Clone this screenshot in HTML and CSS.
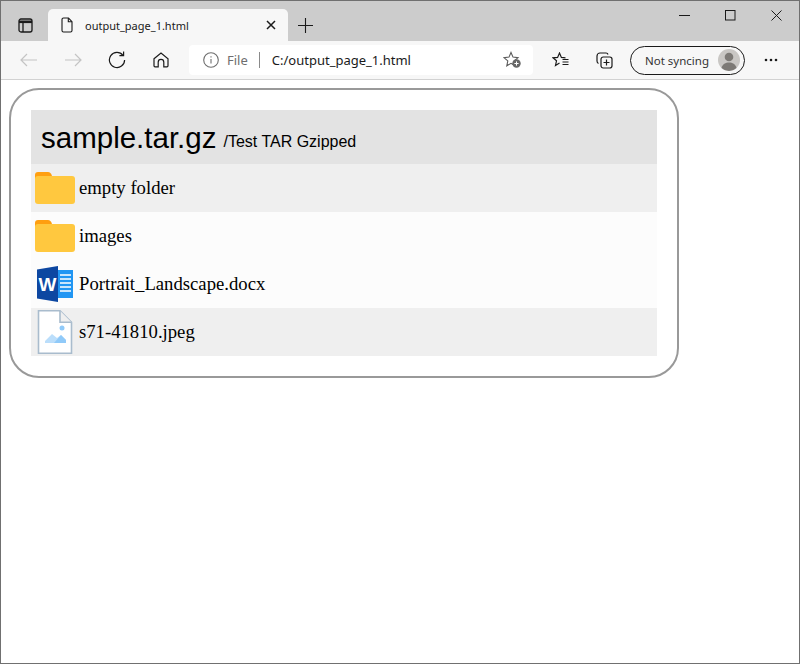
FILE: index.html
```html
<!DOCTYPE html>
<html>
<head>
    <meta charset="UTF-8">
    <title>output_page_1.html</title>
    <link rel="stylesheet" href="styles.css">
</head>
<body>
<div class="ventana">
    <!-- Tab strip -->
    <div class="pestanas">
        <svg class="icono-vertical" width="16" height="15" viewBox="0 0 16 15" fill="none" stroke="#1a1a1a" stroke-width="1.3">
            <rect x="1" y="1" width="13" height="13" rx="2"/>
            <path d="M1 3.800h13" stroke-width="2.600"/>
            <path d="M5 4.500v9.500"/>
        </svg>
        <div class="pestana">
            <svg width="12" height="16" viewBox="0 0 12 16" fill="none" stroke="#1a1a1a" stroke-width="1.1">
                <path d="M1 2.500a1.500 1.500 0 0 1 1.500-1.500h5l3.500 3.700v8.800a1.500 1.500 0 0 1-1.500 1.500h-7a1.500 1.500 0 0 1-1.500-1.500z"/>
                <path d="M7.300 1v3.800h3.700"/>
            </svg>
            <span class="pestana-titulo">output_page_1.html</span>
            <svg width="10" height="10" viewBox="0 0 10 10" stroke="#1a1a1a" stroke-width="1.500">
                <path d="M1 1l8 8M9 1l-8 8"/>
            </svg>
        </div>
        <svg class="icono-nueva" width="15" height="15" viewBox="0 0 15 15" stroke="#1a1a1a" stroke-width="1.100">
            <path d="M7.500 0v15M0 7.500h15"/>
        </svg>
        <div class="controles">
            <svg width="11" height="11" viewBox="0 0 11 11" stroke="#1a1a1a"><path d="M0 5.500h11"/></svg>
            <svg width="11" height="11" viewBox="0 0 11 11" fill="none" stroke="#1a1a1a"><rect x=".5" y=".5" width="9.500" height="9.500"/></svg>
            <svg width="11" height="11" viewBox="0 0 11 11" stroke="#1a1a1a"><path d="M.5.500l10 10M10.500.500l-10 10"/></svg>
        </div>
    </div>

    <!-- Toolbar -->
    <div class="barra">
        <svg class="b-atras" width="18" height="14" viewBox="0 0 18 14" fill="none" stroke="#c4c4c4" stroke-width="1.200">
            <path d="M17 7H1M7 1L1 7l6 6"/>
        </svg>
        <svg class="b-adelante" width="18" height="14" viewBox="0 0 18 14" fill="none" stroke="#c4c4c4" stroke-width="1.200">
            <path d="M1 7h16M11 1l6 6-6 6"/>
        </svg>
        <svg class="b-recargar" width="18" height="18" viewBox="0 0 18 18" fill="none" stroke="#1a1a1a" stroke-width="1.200">
            <path d="M15 4.300A7.600 7.600 0 1 0 16.600 9"/>
            <path d="M15.600 .5v4.200h-4.200"/>
        </svg>
        <svg class="b-inicio" width="16" height="16" viewBox="0 0 16 16" fill="none" stroke="#1a1a1a" stroke-width="1.200">
            <path d="M1 6.800L8 1l7 5.800v7a1 1 0 0 1-1 1h-3.200v-4.600a2.800 2.800 0 0 0-5.600 0v4.600H2a1 1 0 0 1-1-1z"/>
        </svg>
        <div class="direccion">
            <svg width="16" height="16" viewBox="0 0 16 16" fill="none" stroke="#6e6e6e" stroke-width="1.100">
                <circle cx="8" cy="8" r="7.300"/>
                <path d="M8 7v4.600M8 4.200v1.300"/>
            </svg>
            <span class="dir-file">File</span>
            <span class="dir-sep"></span>
            <span class="dir-url">C:/output_page_1.html</span>
            <svg class="dir-fav" width="19" height="18" viewBox="0 0 19 18">
                <path d="M8 1.500l2 4.600 5 .5-3.800 3.300 1 4.900L8 12.300l-4.200 2.500 1-4.900L1 6.600l5-.5z" fill="none" stroke="#5a5a5a" stroke-width="1.100"/>
                <circle cx="13.500" cy="12.500" r="4.200" fill="#666"/>
                <path d="M13.500 10.400v4.200M11.400 12.500h4.200" stroke="#fff" stroke-width="1"/>
            </svg>
        </div>
        <svg class="b-favoritos" width="18" height="17" viewBox="0 0 18 17" fill="none" stroke="#1a1a1a" stroke-width="1.200">
            <path d="M13.500 5.800L9.400 5.400 7.500 1 5.600 5.400 1 5.800l3.500 3-1 4.700 4-2.500"/>
            <path d="M10.500 7.500h6M10.500 10h6M10.500 12.500h6"/>
        </svg>
        <svg class="b-colecciones" width="17" height="17" viewBox="0 0 17 17" fill="none" stroke="#1a1a1a" stroke-width="1.200">
            <path d="M12 2.500a2 2 0 0 0-2-1.500H4a3 3 0 0 0-3 3v5a3 3 0 0 0 1.500 2.600"/>
            <rect x="5" y="5" width="11" height="11" rx="2.200"/>
            <path d="M10.500 7.500v6M7.500 10.500h6"/>
        </svg>
        <div class="sincro">
            <span>Not syncing</span>
            <svg class="avatar" width="22" height="22" viewBox="0 0 22 22">
                <circle cx="11" cy="11" r="11" fill="#c9c7c4"/>
                <circle cx="11" cy="8" r="4.300" fill="#7d7a76"/>
                <path d="M3.500 19c1-4 4-5.500 7.500-5.500s6.500 1.500 7.500 5.500a11 11 0 0 1-15 0z" fill="#7d7a76"/>
            </svg>
        </div>
        <svg class="b-menu" width="14" height="4" viewBox="0 0 14 4" fill="#1a1a1a">
            <circle cx="2" cy="2" r="1.300"/><circle cx="7" cy="2" r="1.300"/><circle cx="12" cy="2" r="1.300"/>
        </svg>
    </div>

    <!-- Page content -->
    <div class="contenido">
        <div class="tarjeta">
            <div class="cabecera">
                <span class="cabecera-nombre">sample.tar.gz</span>
                <span class="cabecera-desc">/Test TAR Gzipped</span>
            </div>
            <div class="fila fila-oscura">
                <svg class="icono" width="40" height="32" viewBox="0 0 40 32">
                    <path d="M0 3a3 3 0 0 1 3-3h10c2 0 3 1 4 4v4h-17z" fill="#ff9f10"/>
                    <rect x="0" y="4" width="40" height="28" rx="3" fill="#ffc83f"/>
                </svg>
                <span>empty folder</span>
            </div>
            <div class="fila">
                <svg class="icono" width="40" height="32" viewBox="0 0 40 32">
                    <path d="M0 3a3 3 0 0 1 3-3h10c2 0 3 1 4 4v4h-17z" fill="#ff9f10"/>
                    <rect x="0" y="4" width="40" height="28" rx="3" fill="#ffc83f"/>
                </svg>
                <span>images</span>
            </div>
            <div class="fila">
                <svg class="icono" width="40" height="36" viewBox="0 0 40 36">
                    <rect x="20" y="4" width="18" height="28" fill="#2196f3"/>
                    <path d="M25 9h11M25 13h11M25 17h11M25 21h11M25 25h11" stroke="#fff" stroke-width="1.500"/>
                    <path d="M2 3.500L23 0v36L2 32.500z" fill="#0d47a1"/>
                    <text class="letra-word" x="3.500" y="24.500">W</text>
                </svg>
                <span>Portrait_Landscape.docx</span>
            </div>
            <div class="fila fila-oscura">
                <svg class="icono" width="40" height="44" viewBox="0 0 40 44">
                    <path d="M3.500 .8h21.500l11.500 11.500v31h-33z" fill="#fff" stroke="#a9bccd" stroke-width="1.600"/>
                    <path d="M25 .8v11.500h11.500" fill="#efefef" stroke="#a9bccd" stroke-width="1.600"/>
                    <circle cx="27" cy="18" r="2.500" fill="#90caf9"/>
                    <path d="M10 33v-2l7-7 5 4 4-3 5 5v3z" fill="#bbdefb"/>
                    <path d="M19 33l7-8 5 5v3z" fill="#90caf9"/>
                </svg>
                <span>s71-41810.jpeg</span>
            </div>
        </div>
    </div>
</div>
</body>
</html>
```

FILE: styles.css
```css
html, body {
    margin: 0;
    padding: 0;
}

.ventana {
    width: 800px;
    height: 664px;
    box-sizing: border-box;
    border: 1px solid #707070;
    background-color: #fff;
    overflow: hidden;
    font-family: "Noto Sans", sans-serif;
}

/* Tab strip */
.pestanas {
    height: 40px;
    background-color: #ccc;
    display: flex;
    align-items: flex-start;
}

.icono-vertical {
    margin: 17px 14px 0 17px;
}

.pestana {
    width: 240px;
    height: 32px;
    margin-top: 8px;
    box-sizing: border-box;
    padding: 0 12px 0 13px;
    background-color: #f7f7f7;
    border-radius: 5px 5px 0 0;
    display: flex;
    align-items: center;
    color: #1a1a1a;
}

.pestana-titulo {
    flex: 1;
    margin-left: 12px;
    font-size: 11px;
}

.icono-nueva {
    margin: 17px 0 0 10px;
}

.controles {
    margin-left: auto;
    margin-top: 9px;
    display: flex;
    gap: 35px;
    padding-right: 17px;
}

/* Toolbar */
.barra {
    height: 38px;
    background-color: #f7f7f7;
    border-bottom: 1px solid #d2d2d2;
    display: flex;
    align-items: center;
}

.b-atras {
    margin-left: 19px;
}

.b-adelante {
    margin-left: 26px;
}

.b-recargar {
    margin-left: 26px;
}

.b-inicio {
    margin-left: 27px;
}

.direccion {
    width: 344px;
    height: 30px;
    margin-left: 20px;
    box-sizing: border-box;
    padding: 0 11px 0 14px;
    background-color: #fff;
    border-radius: 4px;
    display: flex;
    align-items: center;
    font-size: 13px;
}

.dir-file {
    margin-left: 8px;
    color: #6e6e6e;
}

.dir-sep {
    width: 1px;
    height: 16px;
    margin: 0 12px 0 11px;
    background-color: #8a8a8a;
}

.dir-url {
    flex: 1;
    color: #1a1a1a;
}

.b-favoritos {
    margin-left: 19px;
}

.b-colecciones {
    margin-left: 26px;
}

.sincro {
    width: 115px;
    height: 29px;
    margin-left: 17px;
    box-sizing: border-box;
    padding: 0 4px 0 14px;
    border: 1px solid #1a1a1a;
    border-radius: 15px;
    display: flex;
    align-items: center;
    justify-content: space-between;
    font-size: 11.5px;
    color: #333;
}

.b-menu {
    margin-left: 19px;
}

/* Page content */
.contenido {
    padding: 8px 0 0 8px;
}

.tarjeta {
    width: 670px;
    box-sizing: border-box;
    padding: 20px;
    border: 2px solid #999;
    border-radius: 30px;
}

.cabecera {
    height: 54px;
    padding-left: 10px;
    background-color: #e3e3e3;
    display: flex;
    align-items: center;
    gap: 7px;
    font-family: "Liberation Sans", Arial, sans-serif;
    color: #000;
}

.cabecera-nombre {
    font-size: 29.5px;
    margin-top: 1px;
}

.cabecera-desc {
    font-size: 16px;
    margin-top: 9px;
}

.fila {
    height: 48px;
    padding-left: 4px;
    background-color: #fcfcfc;
    display: flex;
    align-items: center;
    gap: 4px;
    font-family: "Liberation Serif", "Times New Roman", serif;
    font-size: 18.7px;
    color: #000;
}

.fila-oscura {
    background-color: #efefef;
}

.letra-word {
    font-family: "Liberation Sans", Arial, sans-serif;
    font-size: 19px;
    font-weight: bold;
    fill: #fff;
}
```
